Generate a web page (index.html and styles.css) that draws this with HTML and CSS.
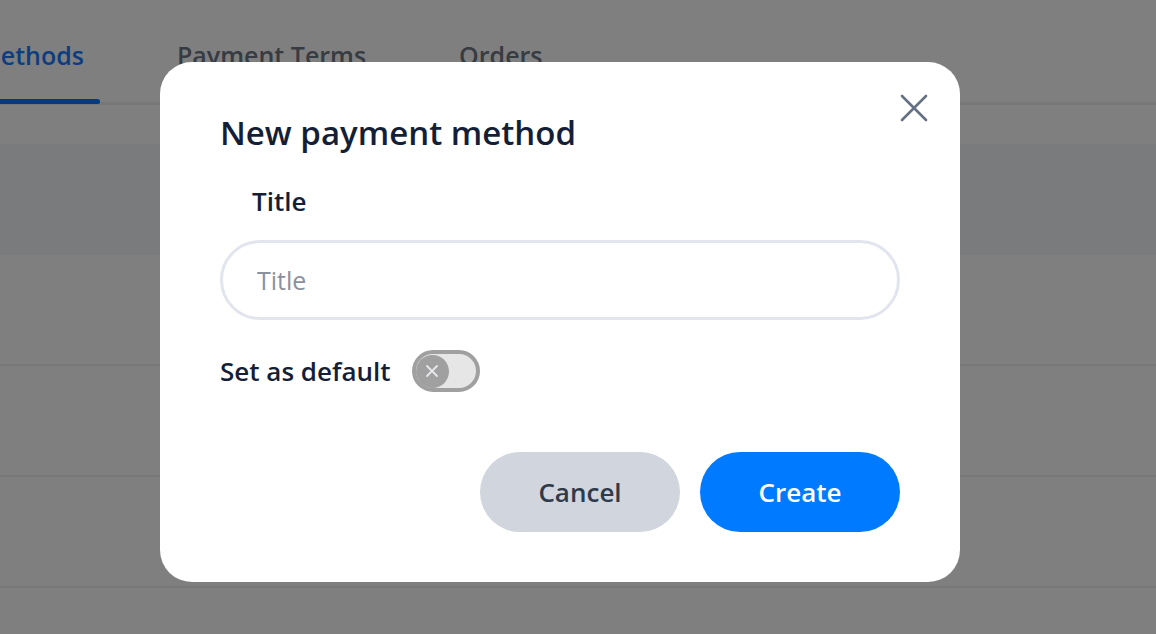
FILE: index.html
```html
<!DOCTYPE html>
<html lang="en">
<head>
    <meta charset="UTF-8">
    <meta name="viewport" content="width=device-width, initial-scale=1.0">
    <title>Payment Methods</title>
    <link rel="stylesheet" href="styles.css">
</head>
<body>
<div class="page">
    <nav class="tabs">
        <a class="tab active">Payment Methods</a>
        <a class="tab">Payment Terms</a>
        <a class="tab">Orders</a>
    </nav>
    <div class="table">
        <div class="table-head"></div>
        <div class="table-row"></div>
        <div class="table-row"></div>
        <div class="table-row"></div>
    </div>
</div>

<div class="overlay">
    <div class="modal">
        <button class="close" aria-label="Close">
            <svg width="28" height="28" viewBox="0 0 28 28" fill="none">
                <path d="M2 2L26 26M26 2L2 26" stroke="#667085" stroke-width="2.6" stroke-linecap="round"/>
            </svg>
        </button>
        <h2 class="modal-title">New payment method</h2>
        <label class="field-label" for="title">Title</label>
        <input id="title" class="field-input" type="text" placeholder="Title">
        <div class="default-row">
            <span>Set as default</span>
            <span class="switch">
                <span class="knob">
                    <svg width="14" height="14" viewBox="0 0 14 14" fill="none">
                        <path d="M2 2L12 12M12 2L2 12" stroke="#e8e8ec" stroke-width="1.8" stroke-linecap="round"/>
                    </svg>
                </span>
            </span>
        </div>
        <div class="actions">
            <button class="btn btn-cancel">Cancel</button>
            <button class="btn btn-create">Create</button>
        </div>
    </div>
</div>
</body>
</html>
```

FILE: styles.css
```css
body {
    margin: 0;
    font-family: "Open Sans", "Liberation Sans", sans-serif;
    background: #fff;
    overflow: hidden;
}
.page {
    padding-top: 38px;
}
.tabs {
    display: flex;
    gap: 61px;
    margin-left: -152px;
    border-bottom: 3px solid #eeeeee;
}
.tab {
    position: relative;
    padding: 0 16px 30px;
    font-size: 25px;
    font-weight: 600;
    color: #6e7684;
    white-space: nowrap;
}
.tab.active {
    color: #1a7bff;
}
.tab.active::after {
    content: "";
    position: absolute;
    left: 0;
    right: 0;
    bottom: -2px;
    height: 5px;
    border-radius: 3px;
    background: #0078ff;
}
.table {
    margin-top: 39px;
}
.table-head {
    height: 111px;
    background: #f5f7fa;
}
.table-row {
    height: 109px;
    border-bottom: 2px solid #eeeeee;
}
.overlay {
    position: fixed;
    inset: 0;
    background: rgba(0, 0, 0, 0.5);
    display: flex;
    align-items: flex-start;
    padding: 62px 0 0 160px;
}
.modal {
    position: relative;
    width: 800px;
    height: 520px;
    box-sizing: border-box;
    padding: 48px 60px 50px;
    background: #fff;
    border-radius: 32px;
    color: #141e36;
}
.close {
    position: absolute;
    top: 32px;
    right: 32px;
    padding: 0;
    border: none;
    background: none;
    width: 28px;
    height: 28px;
}
.modal-title {
    margin: 0;
    font-size: 33px;
    font-weight: 600;
    line-height: 46px;
}
.field-label {
    display: block;
    margin: 30px 0 0 32px;
    font-size: 26px;
    font-weight: 600;
    line-height: 30px;
}
.field-input {
    display: block;
    box-sizing: border-box;
    width: 100%;
    height: 80px;
    margin-top: 24px;
    padding: 0 34px;
    border: 3px solid #e2e5ed;
    border-radius: 40px;
    font-family: inherit;
    font-size: 25px;
    color: #141e36;
    outline: none;
}
.field-input::placeholder {
    color: #8b919d;
}
.default-row {
    display: flex;
    align-items: center;
    gap: 21px;
    margin-top: 30px;
    font-size: 26px;
    font-weight: 600;
}
.switch {
    display: flex;
    align-items: center;
    box-sizing: border-box;
    width: 68px;
    height: 42px;
    padding: 0;
    border: 4px solid #a0a0a0;
    border-radius: 21px;
    background: #e6e6e6;
}
.knob {
    display: flex;
    align-items: center;
    justify-content: center;
    width: 33px;
    height: 33px;
    border-radius: 50%;
    background: #a0a0a0;
}
.actions {
    display: flex;
    justify-content: flex-end;
    gap: 20px;
    margin-top: 60px;
}
.btn {
    width: 200px;
    height: 80px;
    border: none;
    border-radius: 40px;
    font-family: inherit;
    font-size: 26px;
    font-weight: 600;
}
.btn-cancel {
    background: #d1d5dd;
    color: #2f3a4b;
}
.btn-create {
    background: #007aff;
    color: #fff;
}
```
